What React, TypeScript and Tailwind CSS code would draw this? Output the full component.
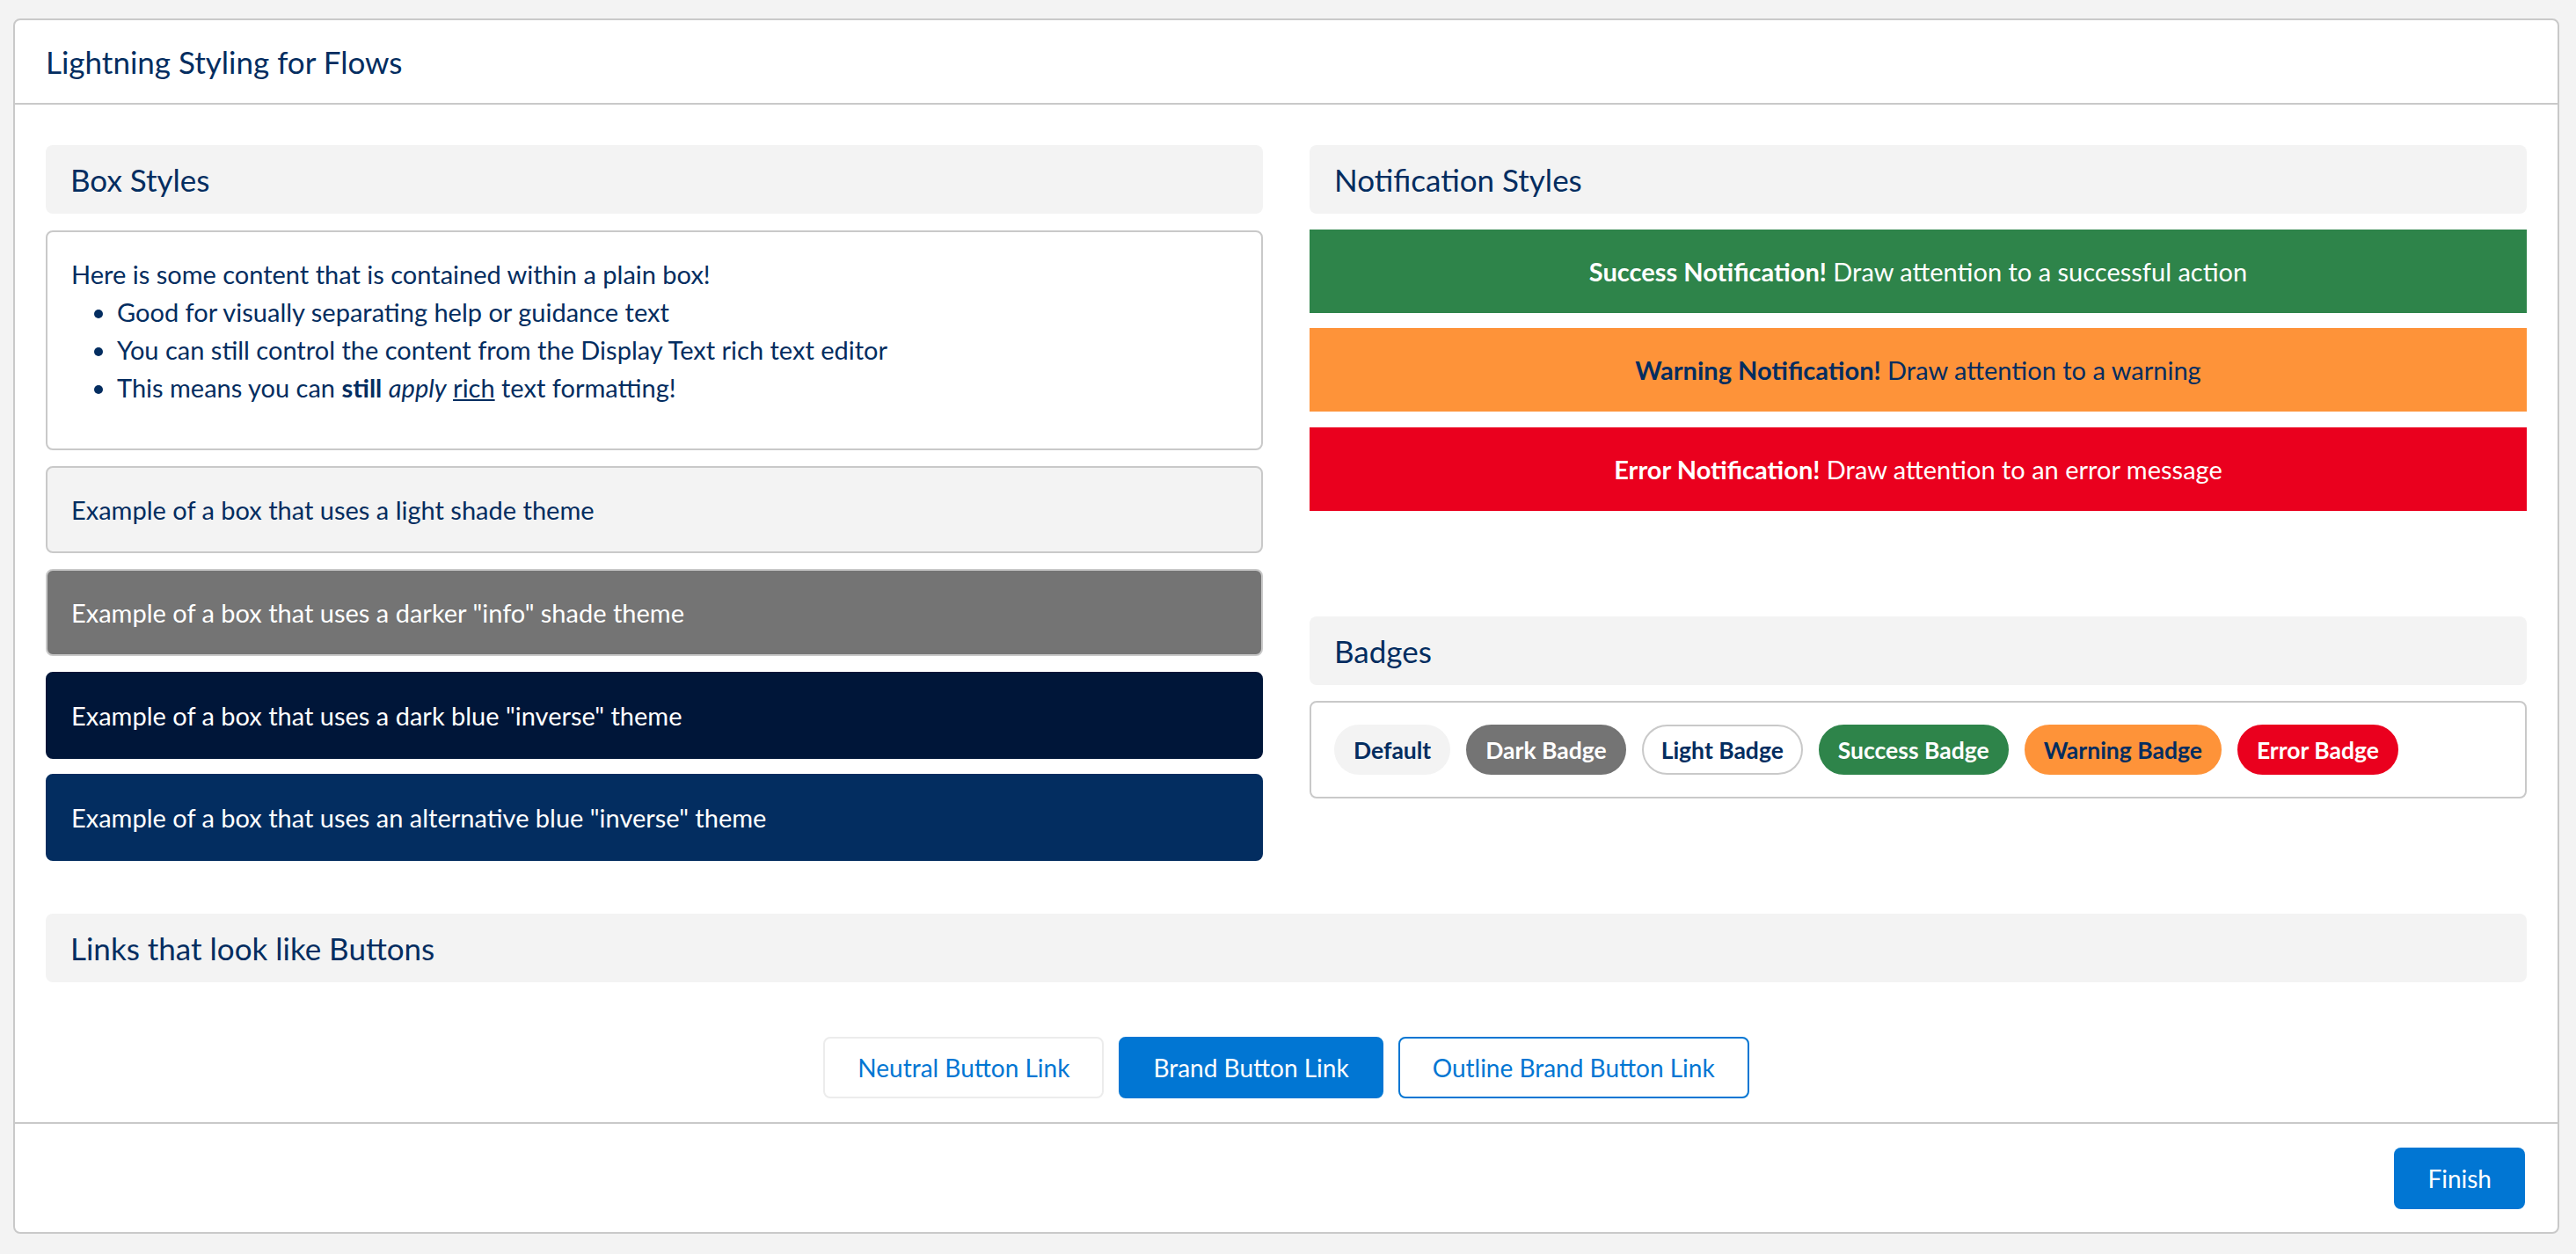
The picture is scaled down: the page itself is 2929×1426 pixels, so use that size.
import React from "react";

const font = { fontFamily: "Lato, 'Open Sans', sans-serif" };

const SectionHeader = ({ title }: { title: string }) => (
  <div className="flex h-[78px] items-center rounded-[8px] bg-[#f3f3f3] pl-[28px] text-[35px] leading-[44px] text-[#032d60]">
    {title}
  </div>
);

const Badge = ({ label, cls }: { label: string; cls: string }) => (
  <span
    className={`flex h-[57px] items-center rounded-full border-2 px-[20px] text-[26.5px] font-bold leading-[32px] ${cls}`}
  >
    {label}
  </span>
);

const App: React.FC = () => {
  return (
    <div className="min-h-screen bg-[#f3f3f3] pt-[21px] pr-[19px] pb-[23px] pl-[15px]" style={font}>
      <div className="overflow-hidden rounded-[8px] border-2 border-[#c9c9c9] bg-white text-[#032d60]">
        {/* Header */}
        <div className="flex h-[96px] items-center border-b-2 border-[#c9c9c9] pl-[35px] text-[35px] leading-[44px]">
          Lightning Styling for Flows
        </div>

        {/* Body */}
        <div className="px-[35px] pt-[46px] pb-[27px] text-[29px] leading-[43px]">
          <div className="grid grid-cols-2 gap-x-[53px]">
            {/* Box styles */}
            <div className="flex flex-col">
              <SectionHeader title="Box Styles" />
              <div className="mt-[19px] rounded-[8px] border-2 border-[#c9c9c9] px-[27px] pt-[26px] pb-[48px]">
                <p>Here is some content that is contained within a plain box!</p>
                <ul className="list-disc pl-[52px]">
                  <li>Good for visually separating help or guidance text</li>
                  <li>You can still control the content from the Display Text rich text editor</li>
                  <li>
                    This means you can <b>still</b> <i>apply</i> <u>rich</u> text formatting!
                  </li>
                </ul>
              </div>
              <div className="mt-[18px] rounded-[8px] border-2 border-[#c9c9c9] bg-[#f3f3f3] px-[27px] py-[26px]">
                Example of a box that uses a light shade theme
              </div>
              <div className="mt-[18px] rounded-[8px] border-2 border-[#c9c9c9] bg-[#747474] px-[27px] py-[26px] text-white">
                Example of a box that uses a darker "info" shade theme
              </div>
              <div className="mt-[18px] rounded-[8px] border-2 border-[#001639] bg-[#001639] px-[27px] py-[26px] text-white">
                Example of a box that uses a dark blue "inverse" theme
              </div>
              <div className="mt-[17px] rounded-[8px] border-2 border-[#032d60] bg-[#032d60] px-[27px] py-[26px] text-white">
                Example of a box that uses an alternative blue "inverse" theme
              </div>
            </div>

            {/* Notifications + badges */}
            <div className="flex flex-col">
              <SectionHeader title="Notification Styles" />
              <div className="mt-[18px] flex h-[95px] items-center justify-center bg-[#2e844a] text-white">
                <span>
                  <b>Success Notification!</b> Draw attention to a successful action
                </span>
              </div>
              <div className="mt-[17px] flex h-[95px] items-center justify-center bg-[#fe9339] text-[#032d60]">
                <span>
                  <b>Warning Notification!</b> Draw attention to a warning
                </span>
              </div>
              <div className="mt-[18px] flex h-[95px] items-center justify-center bg-[#ea001e] text-white">
                <span>
                  <b>Error Notification!</b> Draw attention to an error message
                </span>
              </div>

              <div className="mt-[120px]">
                <SectionHeader title="Badges" />
              </div>
              <div className="mt-[18px] flex gap-[18px] rounded-[8px] border-2 border-[#c9c9c9] px-[26px] py-[25px]">
                <Badge label="Default" cls="border-[#f3f3f3] bg-[#f3f3f3] text-[#032d60]" />
                <Badge label="Dark Badge" cls="border-[#747474] bg-[#747474] text-white" />
                <Badge label="Light Badge" cls="border-[#c9c9c9] bg-white text-[#032d60]" />
                <Badge label="Success Badge" cls="border-[#2e844a] bg-[#2e844a] text-white" />
                <Badge label="Warning Badge" cls="border-[#fe9339] bg-[#fe9339] text-[#032d60]" />
                <Badge label="Error Badge" cls="border-[#ea001e] bg-[#ea001e] text-white" />
              </div>
            </div>
          </div>

          {/* Links */}
          <div className="mt-[60px]">
            <SectionHeader title="Links that look like Buttons" />
          </div>
          <div className="mt-[62px] flex justify-center gap-[17px] text-[28px]">
            <a className="flex h-[70px] items-center rounded-[8px] border-2 border-[#ececec] bg-white px-[37px] text-[#0176d3]">
              Neutral Button Link
            </a>
            <a className="flex h-[70px] items-center rounded-[8px] border-2 border-[#0176d3] bg-[#0176d3] px-[37px] text-white">
              Brand Button Link
            </a>
            <a className="flex h-[70px] items-center rounded-[8px] border-2 border-[#0176d3] bg-white px-[37px] text-[#0176d3]">
              Outline Brand Button Link
            </a>
          </div>
        </div>

        {/* Footer */}
        <div className="flex justify-end border-t-2 border-[#c9c9c9] pt-[27px] pr-[37px] pb-[26px] text-[28px] leading-[43px]">
          <button className="flex h-[70px] items-center rounded-[8px] bg-[#0176d3] px-[38px] text-white">
            Finish
          </button>
        </div>
      </div>
    </div>
  );
};

export default App;
